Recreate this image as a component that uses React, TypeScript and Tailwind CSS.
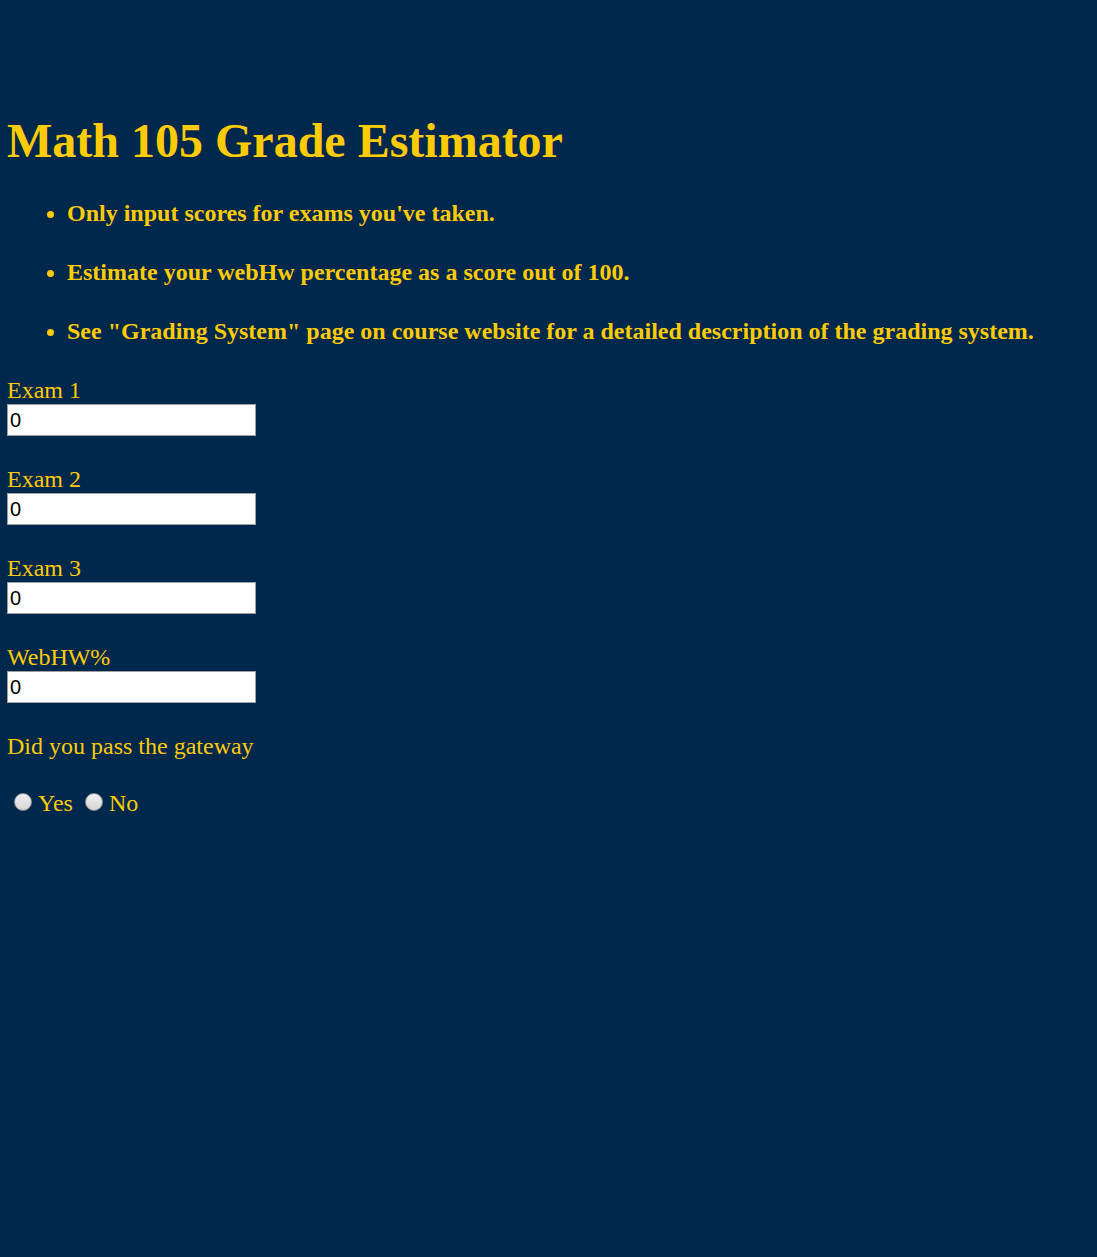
const fields = ["Exam 1", "Exam 2", "Exam 3", "WebHW%"];

const notes = [
  "Only input scores for exams you've taken.",
  "Estimate your webHw percentage as a score out of 100.",
  'See "Grading System" page on course website for a detailed description of the grading system.',
];

const Radio = ({ label }: { label: string }) => (
  <label className="flex items-center gap-[6px]">
    <span className="w-[18px] h-[18px] -mt-[3px] rounded-full border border-[#8f8f8f] bg-gradient-to-b from-[#f0f0f0] to-[#d6d6d6]" />
    <span>{label}</span>
  </label>
);

export default function App() {
  return (
    <div className="min-h-[1257px] bg-[#00274c] text-[#ffcb05] font-['Liberation_Serif',serif] px-[7px] pt-[113px]">
      <h1 className="text-[48px] font-bold leading-[56px]">Math 105 Grade Estimator</h1>
      <ul className="list-disc pl-[60px] mt-[30px] flex flex-col gap-[31px] marker:text-[22px]">
        {notes.map((n) => (
          <li key={n} className="text-[24px] font-bold leading-[28px]">
            {n}
          </li>
        ))}
      </ul>
      <div className="mt-[32px] flex flex-col gap-[30px] text-[24px]">
        {fields.map((f) => (
          <div key={f} className="flex flex-col">
            <span className="leading-[27px]">{f}</span>
            <input
              defaultValue="0"
              className="w-[249px] h-[32px] bg-white border border-[#a0a0a0] text-black text-[20px] px-[2px] font-['Liberation_Sans',sans-serif] outline-none"
            />
          </div>
        ))}
        <div className="leading-[26px]">Did you pass the gateway</div>
      </div>
      <div className="flex items-center gap-[12px] pl-[7px] mt-[31px] text-[24px] leading-[26px]">
        <Radio label="Yes" />
        <Radio label="No" />
      </div>
    </div>
  );
}
